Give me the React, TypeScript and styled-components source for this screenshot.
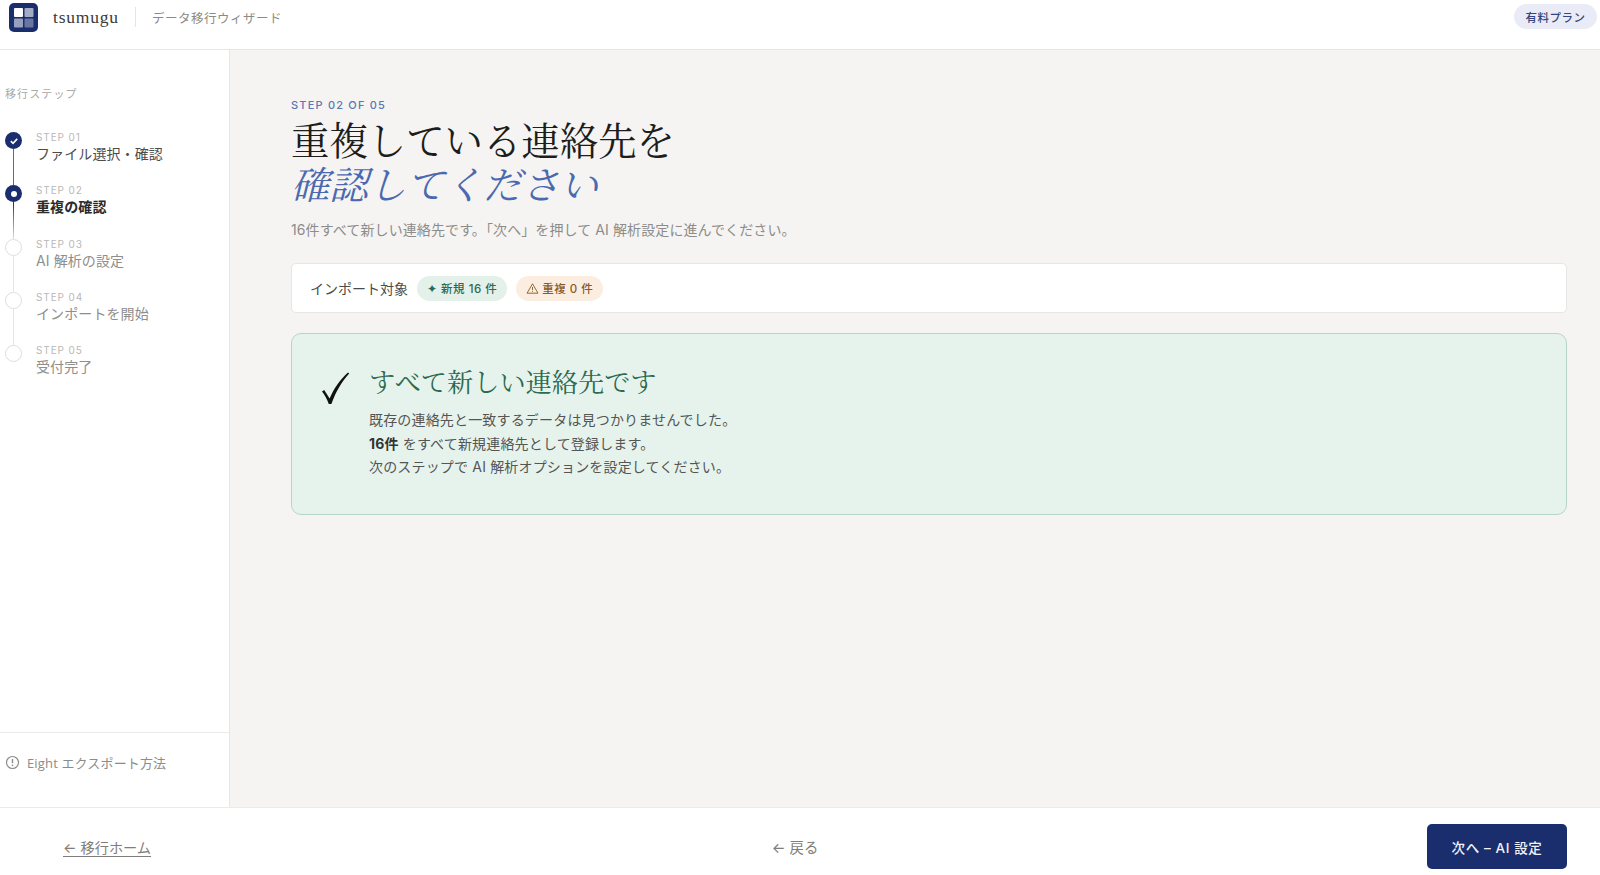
import React from 'react';
import styled, { createGlobalStyle } from 'styled-components';

const SANS = `Inter, "Noto Sans CJK JP", sans-serif`;
const SERIF = `"Liberation Serif", "Noto Serif CJK JP", "Noto Sans CJK JP", serif`;
const NAVY = '#1a2e6e';

const GlobalStyle = createGlobalStyle`
  html, body { margin: 0; padding: 0; height: 100%; }
  body { background: #fff; font-family: ${SANS}; color: #1c1c1c; }
  * { box-sizing: border-box; }
`;

const Page = styled.div`
  width: 1600px;
  height: 875px;
  display: flex;
  flex-direction: column;
  overflow: hidden;
`;

const Header = styled.header`
  height: 50px;
  flex: none;
  display: flex;
  align-items: flex-start;
  justify-content: space-between;
  padding: 2px 3px 0 9px;
  border-bottom: 1px solid #e8e6e3;
  background: #fff;
`;

const Brand = styled.div`
  display: flex;
  align-items: center;
  height: 30px;
`;

const BrandName = styled.span`
  margin-left: 15px;
  font-family: ${SERIF};
  font-size: 17.5px;
  letter-spacing: 0.8px;
  color: #3a3a3a;
`;

const BrandDivider = styled.span`
  width: 1px;
  height: 20px;
  margin: 0 16px;
  background: #e6e4e0;
`;

const WizardName = styled.span`
  font-size: 12.5px;
  letter-spacing: 0.5px;
  color: #8a8a88;
`;

const PlanPill = styled.span`
  margin-top: 2px;
  height: 25px;
  width: 83px;
  border-radius: 13px;
  background: #e9ecf6;
  color: #33457c;
  font-size: 11.5px;
  font-weight: 500;
  letter-spacing: 0.5px;
  display: flex;
  align-items: center;
  justify-content: center;
`;

const Body = styled.div`
  flex: 1;
  display: flex;
  min-height: 0;
`;

const Sidebar = styled.aside`
  width: 230px;
  flex: none;
  display: flex;
  flex-direction: column;
  background: #fff;
  border-right: 1px solid #e8e6e3;
`;

const SidebarTitle = styled.div`
  margin: 36px 0 0 5px;
  height: 16px;
  line-height: 16px;
  font-size: 11px;
  letter-spacing: 1.1px;
  color: #aaa9a6;
`;

const StepList = styled.ol`
  list-style: none;
  margin: 30px 0 0 5px;
  padding: 0;
  flex: 1;
`;

const StepRow = styled.li`
  height: 53.3px;
  display: flex;
  gap: 14px;
`;

const Rail = styled.div`
  width: 17px;
  flex: none;
  display: flex;
  flex-direction: column;
  align-items: center;
`;

const Dot = styled.div<{ $state: 'done' | 'current' | 'todo' }>`
  width: 17px;
  height: 17px;
  flex: none;
  border-radius: 50%;
  display: flex;
  align-items: center;
  justify-content: center;
  background: ${({ $state }) => ($state === 'todo' ? '#fff' : NAVY)};
  border: ${({ $state }) => ($state === 'todo' ? '1.5px solid #dfdeda' : 'none')};
`;

const InnerDot = styled.span`
  width: 6px;
  height: 6px;
  border-radius: 50%;
  background: #fff;
`;

const RailLine = styled.div<{ $kind: 'done' | 'fade' | 'todo' }>`
  width: 1.5px;
  flex: 1;
  background: ${({ $kind }) =>
    $kind === 'done'
      ? '#5a6a9c'
      : $kind === 'fade'
        ? `linear-gradient(${NAVY}, #dfdeda)`
        : '#e6e5e1'};
`;

const StepText = styled.div`
  margin-top: -2px;
`;

const StepLabel = styled.div`
  font-size: 10px;
  line-height: 14px;
  letter-spacing: 0.9px;
  color: #b9b8b5;
`;

const StepName = styled.div<{ $state: 'done' | 'current' | 'todo' }>`
  font-size: 14px;
  line-height: 19px;
  letter-spacing: 0.1px;
  font-weight: ${({ $state }) => ($state === 'current' ? 700 : 400)};
  color: ${({ $state }) =>
    $state === 'todo' ? '#8f8e8b' : $state === 'current' ? '#2a2a2a' : '#4c4c4a'};
`;

const HelpLink = styled.div`
  height: 75px;
  flex: none;
  border-top: 1px solid #eceae7;
  padding: 20px 0 0 5px;
  display: flex;
  align-items: flex-start;
  gap: 7px;
  font-family: "Open Sans", "Noto Sans CJK JP", sans-serif;
  font-size: 13px;
  line-height: 20px;
  color: #8d8c89;
  letter-spacing: 0.15px;
  svg { margin-top: 2px; }
`;

const Main = styled.main`
  flex: 1;
  background: #f5f4f2;
  padding: 47px 33px 0 61px;
`;

const Eyebrow = styled.div`
  font-size: 11px;
  line-height: 16px;
  font-weight: 500;
  letter-spacing: 1.2px;
  color: #5b76b5;
`;

const Heading = styled.h1`
  margin: 7px 0 0;
  font-family: ${SERIF};
  font-size: 38.4px;
  line-height: 44px;
  font-weight: 400;
  color: #1d1d1b;
`;

const HeadingAccent = styled.em`
  display: block;
  color: #4a69b0;
  font-style: italic;
`;

const Lead = styled.p`
  margin: 11px 0 0;
  font-size: 14px;
  line-height: 22px;
  letter-spacing: 0.1px;
  color: #8d8c89;
`;

const SummaryCard = styled.div`
  margin-top: 22px;
  height: 50px;
  display: flex;
  align-items: center;
  padding-left: 18px;
  background: #fff;
  border: 1px solid #e8e6e3;
  border-radius: 5px;
`;

const SummaryLabel = styled.span`
  font-size: 14px;
  color: #4c4c4a;
  margin-right: 9px;
`;

const CountPill = styled.span<{ $tone: 'green' | 'amber' }>`
  height: 25px;
  padding: 0 10px;
  margin-right: 9px;
  border-radius: 13px;
  display: inline-flex;
  align-items: center;
  gap: 3px;
  font-size: 11.5px;
  font-weight: 500;
  letter-spacing: 0.5px;
  background: ${({ $tone }) => ($tone === 'green' ? '#e4f0ea' : '#fbeee0')};
  color: ${({ $tone }) => ($tone === 'green' ? '#2d6a4f' : '#8a5a22')};
`;

const SuccessCard = styled.section`
  margin-top: 20px;
  height: 182px;
  display: flex;
  gap: 17px;
  padding: 32px 30px 0 28px;
  background: #e6f3ed;
  border: 1px solid #b5d6c6;
  border-radius: 10px;
`;

const CheckIcon = styled.svg`
  width: 32px;
  height: 34px;
  flex: none;
  margin-top: 5px;
`;

const SuccessTitle = styled.h2`
  margin: 0;
  font-family: ${SERIF};
  font-size: 26.2px;
  line-height: 36px;
  font-weight: 400;
  color: #2d6a4f;
`;

const SuccessBody = styled.div`
  margin-top: 6px;
  font-size: 14px;
  line-height: 23.5px;
  letter-spacing: 0.17px;
  color: #555553;
  strong { font-weight: 700; color: #333; }
`;

const Footer = styled.footer`
  height: 68px;
  flex: none;
  display: grid;
  grid-template-columns: 1fr auto 1fr;
  align-items: center;
  padding: 10px 33px 0 63px;
  background: #fff;
  border-top: 1px solid #eceae7;
`;

const HomeLink = styled.a`
  justify-self: start;
  font-size: 14.2px;
  color: #7f7e7b;
  text-decoration: underline;
  text-underline-offset: 3px;
`;

const BackLink = styled.a`
  font-size: 14.4px;
  color: #7f7e7b;
  margin-right: 40px;
`;

const NextButton = styled.button`
  justify-self: end;
  width: 140px;
  height: 45px;
  border: none;
  border-radius: 5px;
  background: ${NAVY};
  color: #f2f3f8;
  font-family: ${SANS};
  font-size: 13.5px;
  font-weight: 500;
  letter-spacing: 0.6px;
`;

type StepState = 'done' | 'current' | 'todo';

const steps: { label: string; name: string; state: StepState; line?: 'done' | 'fade' | 'todo' }[] = [
  { label: 'STEP 01', name: 'ファイル選択・確認', state: 'done', line: 'done' },
  { label: 'STEP 02', name: '重複の確認', state: 'current', line: 'fade' },
  { label: 'STEP 03', name: 'AI 解析の設定', state: 'todo', line: 'todo' },
  { label: 'STEP 04', name: 'インポートを開始', state: 'todo', line: 'todo' },
  { label: 'STEP 05', name: '受付完了', state: 'todo' },
];

function Logo() {
  return (
    <svg width="29" height="29" viewBox="0 0 29 29">
      <rect width="29" height="29" rx="5" fill={NAVY} />
      <rect x="5" y="5" width="9" height="9" rx="1" fill="#fff" />
      <rect x="15.5" y="5" width="9" height="9" rx="1" fill="#fff" opacity="0.6" />
      <rect x="5" y="15.5" width="9" height="9" rx="1" fill="#fff" opacity="0.55" />
      <rect x="15.5" y="15.5" width="9" height="9" rx="1" fill="#fff" opacity="0.35" />
    </svg>
  );
}

function StepDot({ state }: { state: StepState }) {
  return (
    <Dot $state={state}>
      {state === 'done' && (
        <svg width="10" height="10" viewBox="0 0 10 10" fill="none">
          <path d="M1.8 5.2 4 7.3 8.2 2.9" stroke="#fff" strokeWidth="1.6" />
        </svg>
      )}
      {state === 'current' && <InnerDot />}
    </Dot>
  );
}

export default function App() {
  return (
    <Page>
      <GlobalStyle />
      <Header>
        <Brand>
          <Logo />
          <BrandName>tsumugu</BrandName>
          <BrandDivider />
          <WizardName>データ移行ウィザード</WizardName>
        </Brand>
        <PlanPill>有料プラン</PlanPill>
      </Header>
      <Body>
        <Sidebar>
          <SidebarTitle>移行ステップ</SidebarTitle>
          <StepList>
            {steps.map((step) => (
              <StepRow key={step.label}>
                <Rail>
                  <StepDot state={step.state} />
                  {step.line && <RailLine $kind={step.line} />}
                </Rail>
                <StepText>
                  <StepLabel>{step.label}</StepLabel>
                  <StepName $state={step.state}>{step.name}</StepName>
                </StepText>
              </StepRow>
            ))}
          </StepList>
          <HelpLink>
            <svg width="15" height="15" viewBox="0 0 15 15" fill="none">
              <circle cx="7.5" cy="7.5" r="6" stroke="#8d8c89" strokeWidth="1.2" />
              <path d="M7.5 4v4.2" stroke="#8d8c89" strokeWidth="1.4" />
              <circle cx="7.5" cy="10.4" r="0.8" fill="#8d8c89" />
            </svg>
            Eight エクスポート方法
          </HelpLink>
        </Sidebar>
        <Main>
          <Eyebrow>STEP 02 OF 05</Eyebrow>
          <Heading>
            重複している連絡先を
            <HeadingAccent>確認してください</HeadingAccent>
          </Heading>
          <Lead>16件すべて新しい連絡先です。「次へ」を押して AI 解析設定に進んでください。</Lead>
          <SummaryCard>
            <SummaryLabel>インポート対象</SummaryLabel>
            <CountPill $tone="green">✦ 新規 16 件</CountPill>
            <CountPill $tone="amber">
              <svg width="13" height="13" viewBox="0 0 13 13" fill="none">
                <path d="M6.5 1.8 12 11.2H1z" stroke="#8a5a22" strokeWidth="0.9" strokeLinejoin="round" />
                <path d="M6.5 5v3.2M6.5 9.1v.8" stroke="#8a5a22" strokeWidth="0.9" />
              </svg>
              重複 0 件
            </CountPill>
          </SummaryCard>
          <SuccessCard>
            <CheckIcon viewBox="0 0 32 34">
              <path d="M2 20.5 4.2 19 9.6 27.6C13.8 17.6 20 8.6 28 1.5L29.2 2.6C21.6 11 16 20.6 11.4 33H8.8C7 28 4.8 24 2 20.5Z" fill="#111" />
            </CheckIcon>
            <div>
              <SuccessTitle>すべて新しい連絡先です</SuccessTitle>
              <SuccessBody>
                既存の連絡先と一致するデータは見つかりませんでした。
                <br />
                <strong>16件</strong> をすべて新規連絡先として登録します。
                <br />
                次のステップで AI 解析オプションを設定してください。
              </SuccessBody>
            </div>
          </SuccessCard>
        </Main>
      </Body>
      <Footer>
        <HomeLink>← 移行ホーム</HomeLink>
        <BackLink>← 戻る</BackLink>
        <NextButton>次へ – AI 設定</NextButton>
      </Footer>
    </Page>
  );
}
